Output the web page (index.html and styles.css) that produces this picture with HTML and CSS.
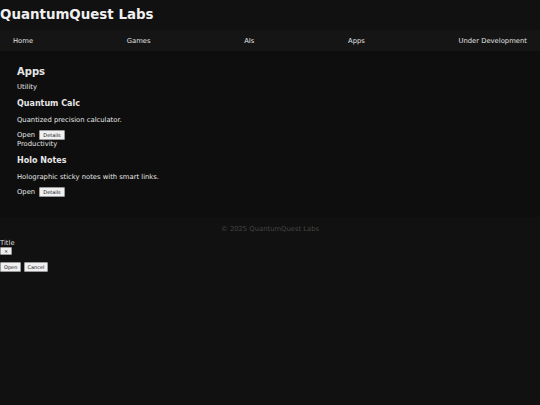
FILE: index.html
```html
<!DOCTYPE html>
<html lang="en">
<head>
  <meta charset="UTF-8">
  <meta name="viewport" content="width=device-width, initial-scale=1.0">
  <title>QuantumQuest Labs - Apps</title>
  <link rel="stylesheet" href="styles.css">
</head>
<body>
  <header class="site-header">
    <h1>QuantumQuest Labs</h1>
  </header>
  <nav class="site-nav">
    <a href="#">Home</a>
    <a href="#">Games</a>
    <a href="#">AIs</a>
    <a href="#">Apps</a>
    <a href="#">Under Development</a>
  </nav>

  <main class="content">
    <h2>Apps</h2>
    <!-- Utility -->
    <div class="category">Utility</div>
    <div class="card">
      <h3>Quantum Calc</h3>
      <p>Quantized precision calculator.</p>
      <div class="actions">Open <button class="btn-small">Details</button></div>
    </div>
    <!-- Productivity -->
    <div class="category">Productivity</div>
    <div class="card">
      <h3>Holo Notes</h3>
      <p>Holographic sticky notes with smart links.</p>
      <div class="actions">Open <button class="btn-small">Details</button></div>
    </div>
  </main>

  <footer class="site-footer">&copy; 2025 QuantumQuest Labs</footer>

  <div class="modal">
    <div class="modal-title">Title</div>
    <button class="btn-small btn-close">&times;</button>
    <div class="modal-buttons">
      <button class="btn-small">Open</button>
      <button class="btn-small">Cancel</button>
    </div>
  </div>
</body>
</html>
```

FILE: styles.css
```css
body {
  font-family: "DejaVu Sans", Verdana, sans-serif;
  margin: 0;
  padding: 0;
  background-color: #111111;
  color: #e6e6e6;
  font-size: 6.8px;
}

.site-header h1 {
  margin: 0;
  padding: 6px 0 6px;
  font-size: 13.4px;
  line-height: 18px;
  color: #f0f0f0;
}

.site-nav {
  display: flex;
  justify-content: space-between;
  padding: 0 13px;
  height: 21px;
  align-items: center;
  background-color: #151515;
}

.site-nav a {
  color: #e0e0e0;
  text-decoration: none;
  font-size: 6.8px;
}

.content {
  background-color: #0e0e0e;
  padding: 14px 17px 20px;
}

.content h2 {
  margin: 0 0 5px;
  font-size: 10px;
  line-height: 13px;
}

.category {
  line-height: 9px;
}

.card h3 {
  margin: 6px 0 7px;
  font-size: 8px;
  line-height: 11px;
}

.card p {
  margin: 0 0 5px;
  line-height: 9px;
}

.actions {
  line-height: 9px;
}

.btn-small {
  font-family: "DejaVu Sans", Verdana, sans-serif;
  font-size: 5px;
  padding: 1px 3px;
  background-color: #f0f0f0;
  color: #111111;
  border: 1px solid #999999;
  border-radius: 1px;
  margin-left: 2px;
}

.site-footer {
  text-align: center;
  color: #444444;
  padding: 8px 0 5px;
  line-height: 9px;
}

.modal-title {
  line-height: 8px;
  color: #dddddd;
}

.modal .btn-small {
  margin-left: 0;
}

.btn-close {
  display: block;
  padding: 0 3px;
}

.modal-buttons {
  margin-top: 7px;
}
```
